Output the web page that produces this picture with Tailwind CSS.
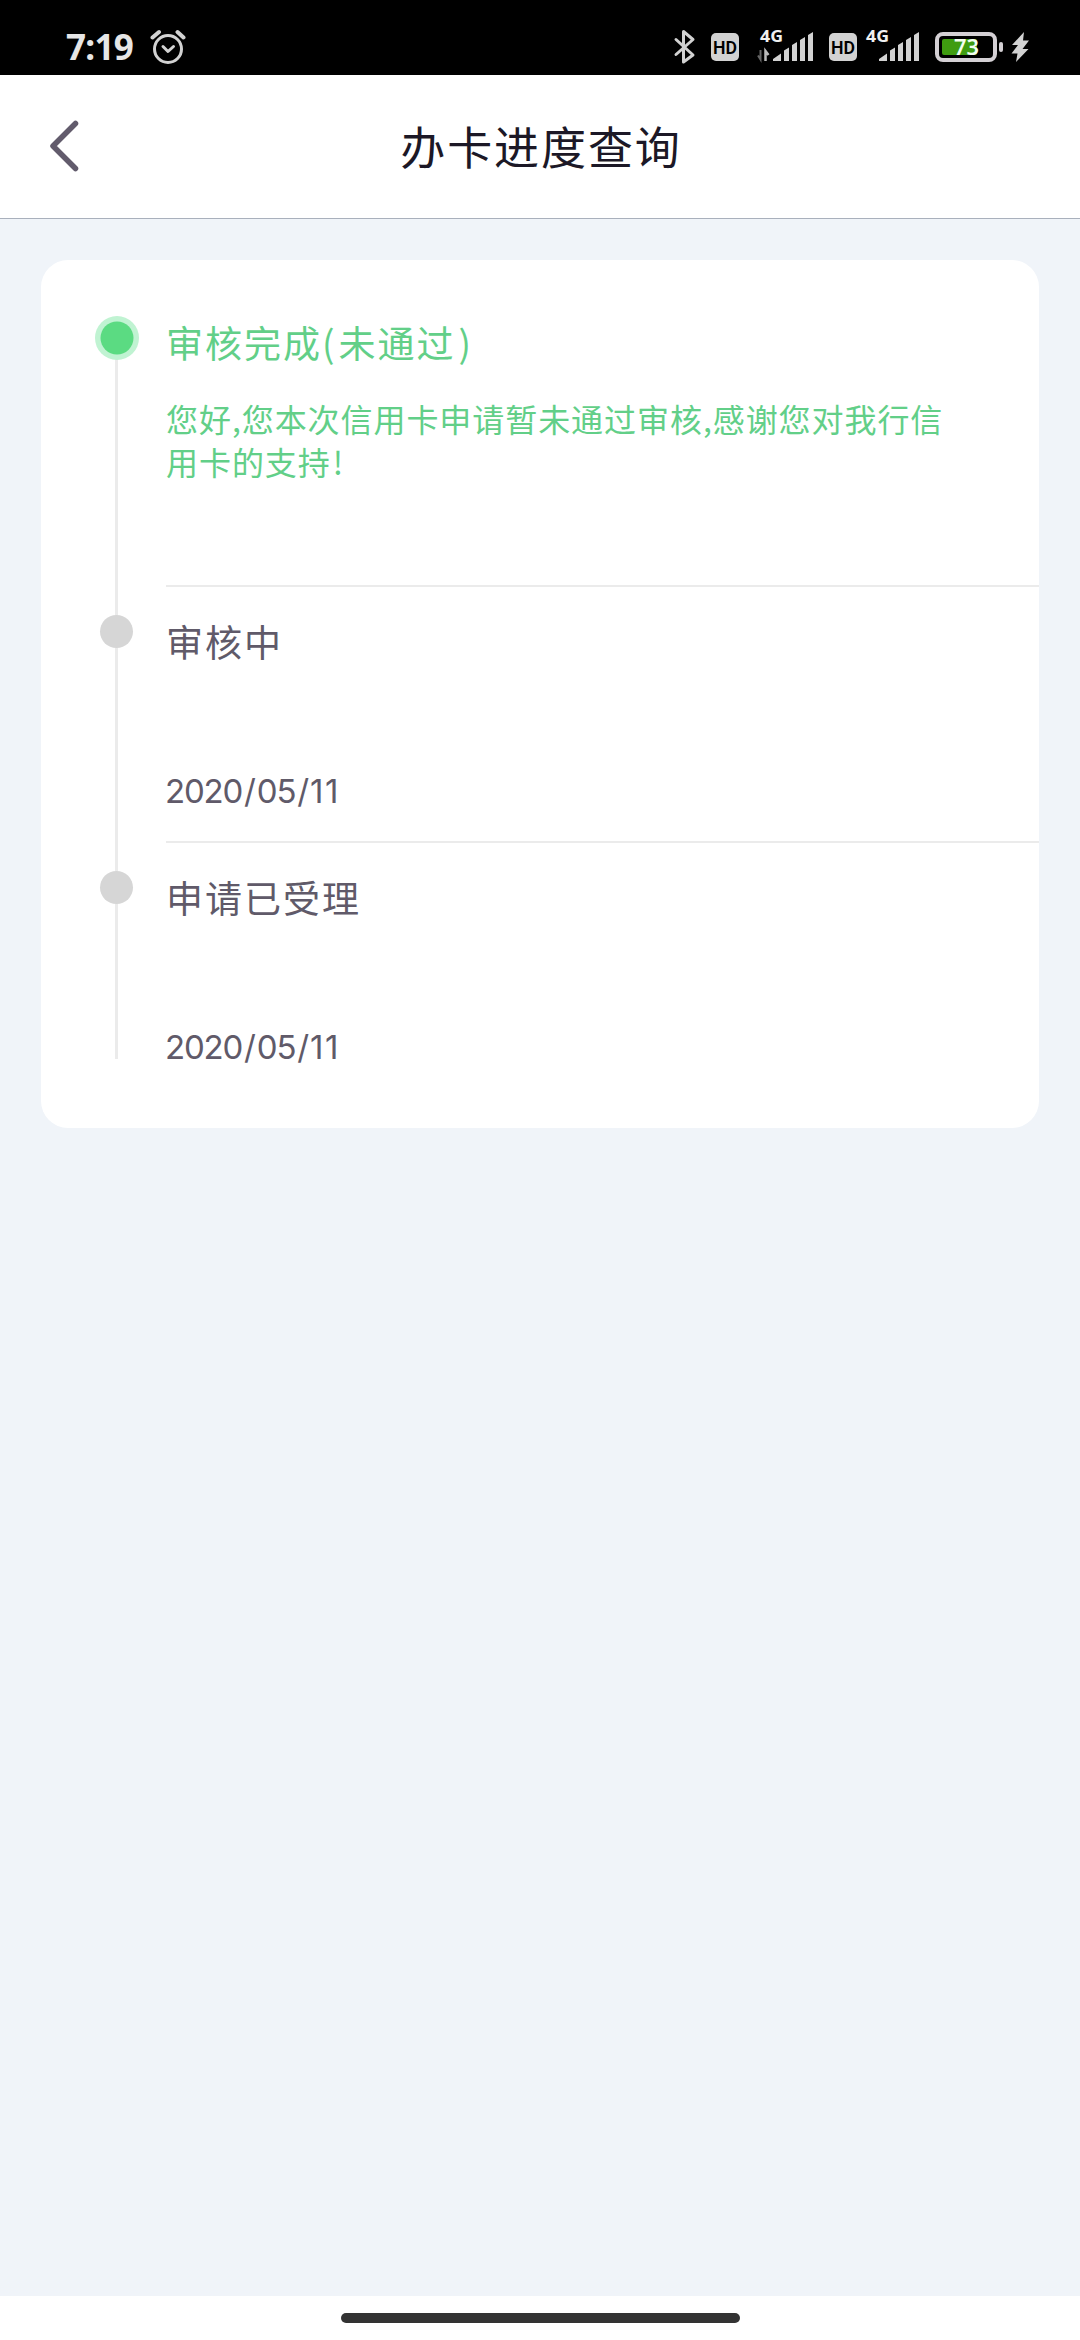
<!DOCTYPE html>
<html lang="zh-CN">
<head>
  <meta charset="UTF-8">
  <meta name="viewport" content="width=device-width, initial-scale=1.0">
  <title>办卡进度查询</title>
  <script src="https://cdn.jsdelivr.net/npm/@tailwindcss/browser@4"></script>
</head>
<body class="bg-[#f0f4f9] font-['Noto_Sans_CJK_SC',sans-serif]">
  <div class="w-[1080px] h-[2340px] flex flex-col overflow-hidden">

    <!-- Status bar -->
    <div class="h-[75px] shrink-0 bg-black flex text-[#d2d2d2]">
      <div class="w-[84px] ml-[66px] pt-[23px] text-[35px] leading-[47px] font-bold text-[#e6e6e6] font-['Noto_Sans',sans-serif] tracking-[-0.700px]">7:19</div>
      <!-- Alarm -->
      <svg class="w-[36px] h-[75px]" viewBox="150 0 36 75" fill="none" stroke="currentColor" stroke-width="3" stroke-linecap="round" stroke-linejoin="round">
        <circle cx="168" cy="49" r="13.5"/>
        <path d="M163 46.500l5 5 5.500-5"/>
        <path d="M152.500 37.500l6.500-5.500M177.500 32l6 5.500" stroke-width="4"/>
      </svg>
      <div class="ml-auto mr-[49px] flex">
        <!-- Bluetooth -->
        <svg class="w-[25px] h-[75px] mr-[14px]" viewBox="671 0 25 75" fill="none" stroke="currentColor" stroke-width="3" stroke-linejoin="round" stroke-linecap="round">
          <path d="M675 39.500l17 15.500-9.500 7V31.500l9.500 8-17 15"/>
        </svg>
        <!-- HD -->
        <svg class="w-[28px] h-[75px] mr-[17px]" viewBox="710 0 28 75">
          <rect x="710" y="33" width="28" height="28" rx="5" fill="currentColor"/>
          <text x="724" y="54" text-anchor="middle" textLength="24" lengthAdjust="spacingAndGlyphs" font-family="Roboto, sans-serif" font-size="19" font-weight="600" fill="#000">HD</text>
        </svg>
        <!-- Signal 1 -->
        <svg class="w-[58px] h-[75px] mr-[15px]" viewBox="755 0 58 75" fill="currentColor">
          <text x="759" y="42" textLength="23" lengthAdjust="spacingAndGlyphs" font-family="Noto Sans, sans-serif" font-size="16" font-weight="700" fill="#f0f0f0">4G</text>
          <path d="M757 55.500l2.500 4V50" fill="none" stroke="#666" stroke-width="2"/>
          <path d="M764.500 61V51l3 4" fill="none" stroke="#bbb" stroke-width="2.500"/>
          <path d="M772 61v-2l8-5.500V61zM783 61V50.500l5-3V61zM791 61V45l5-3V61zM799 61V40l5-3V61zM807 61V35l5-3V61z"/>
        </svg>
        <!-- HD -->
        <svg class="w-[28px] h-[75px] mr-[8px]" viewBox="828 0 28 75">
          <rect x="828" y="33" width="28" height="28" rx="5" fill="currentColor"/>
          <text x="842" y="54" text-anchor="middle" textLength="24" lengthAdjust="spacingAndGlyphs" font-family="Roboto, sans-serif" font-size="19" font-weight="600" fill="#000">HD</text>
        </svg>
        <!-- Signal 2 -->
        <svg class="w-[56px] h-[75px] mr-[14px]" viewBox="864 0 56 75" fill="currentColor">
          <text x="865" y="42" textLength="23" lengthAdjust="spacingAndGlyphs" font-family="Noto Sans, sans-serif" font-size="16" font-weight="700" fill="#f0f0f0">4G</text>
          <path d="M878 61v-2l8-5.500V61zM889 61V50.500l5-3V61zM897 61V45l5-3V61zM905 61V40l5-3V61zM913 61V35l5-3V61z"/>
        </svg>
        <!-- Battery -->
        <svg class="w-[70px] h-[75px] mr-[5px]" viewBox="934 0 70 75">
          <rect x="936" y="34" width="58" height="26" rx="6" fill="none" stroke="#d4d0d4" stroke-width="4"/>
          <rect x="941" y="39" width="35" height="16" rx="2" fill="#3f9c10"/>
          <rect x="998" y="42" width="4" height="10" rx="2" fill="#d4d0d4"/>
          <text x="965.500" y="55" text-anchor="middle" textLength="25" lengthAdjust="spacingAndGlyphs" font-family="Noto Sans, sans-serif" font-size="22" font-weight="600" fill="#f4fff0">73</text>
        </svg>
        <!-- Charging bolt -->
        <svg class="w-[21px] h-[75px]" viewBox="1009 0 21 75" fill="currentColor">
          <path d="M1023 32L1011 45h6l-6.500 8.500h6L1015 62l12.500-13h-6l6.500-8.500h-6z"/>
        </svg>
      </div>
    </div>

    <!-- Header -->
    <div class="h-[144px] shrink-0 bg-white border-b border-[#a9b0bc] grid grid-cols-[1fr_auto_1fr] items-center">
      <svg class="w-[40px] h-[60px] ml-[44px]" viewBox="44 117 40 60" fill="none" stroke="#625b6c" stroke-width="5.500" stroke-linecap="round" stroke-linejoin="round">
        <path d="M75.500 123.500L53 146l22.500 22.500"/>
      </svg>
      <h1 class="text-[45px] leading-[60px] tracking-[1.900px] pl-[2px] pb-[2px] text-[#1c1826]">办卡进度查询</h1>
    </div>

    <!-- Progress card -->
    <div class="mt-[41px] ml-[41px] w-[998px] h-[868px] shrink-0 bg-white rounded-[27px] flex">
      <!-- Timeline -->
      <div class="w-[125px] shrink-0">
        <svg class="w-[125px] h-[868px]" viewBox="41 260 125 868">
          <path d="M116.500 338V1059" stroke="#ebebeb" stroke-width="3"/>
          <circle cx="117" cy="338" r="22" fill="#c0f3d2"/>
          <circle cx="117" cy="338" r="16.500" fill="#5bdb82"/>
          <circle cx="116.500" cy="631.500" r="16.500" fill="#d6d6d6"/>
          <circle cx="116.500" cy="887.500" r="16.500" fill="#d6d6d6"/>
        </svg>
      </div>
      <div class="flex-1">
        <div class="h-[327px] pt-[55px] border-b-2 border-[#ebebeb] text-[#62cf88]">
          <h2 class="text-[37px] leading-[54px] tracking-[2px]">审核完成<span class="tracking-[4px]">(</span>未通过<span class="pl-[3px]">)</span></h2>
          <p class="mt-[28px] text-[32px] leading-[43px] tracking-[0.940px] whitespace-nowrap">您好,您本次信用卡申请暂未通过审核,感谢您对我行信<br>用卡的支持<span class="pl-[2px]">!</span></p>
        </div>
        <div class="h-[256px] pt-[27px] border-b-2 border-[#ebebeb] text-[#605a69]">
          <h2 class="text-[37px] leading-[54px] tracking-[2px]">审核中</h2>
          <p class="mt-[101px] -ml-px text-[33px] leading-[44px] tracking-[-1.200px] font-['Inter',sans-serif]">2020<span class="px-[2px]">/</span>05<span class="px-[2px]">/</span><span class="tracking-[1.500px]">11</span></p>
        </div>
        <div class="pt-[27px] text-[#605a69]">
          <h2 class="text-[37px] leading-[54px] tracking-[2px]">申请已受理</h2>
          <p class="mt-[101px] -ml-px text-[33px] leading-[44px] tracking-[-1.200px] font-['Inter',sans-serif]">2020<span class="px-[2px]">/</span>05<span class="px-[2px]">/</span><span class="tracking-[1.500px]">11</span></p>
        </div>
      </div>
    </div>

    <!-- Gesture bar -->
    <div class="mt-auto h-[44px] shrink-0 bg-white flex justify-center pt-[17px]">
      <div class="w-[399px] h-[10px] rounded-full bg-[#333333]"></div>
    </div>
  </div>
</body>
</html>
